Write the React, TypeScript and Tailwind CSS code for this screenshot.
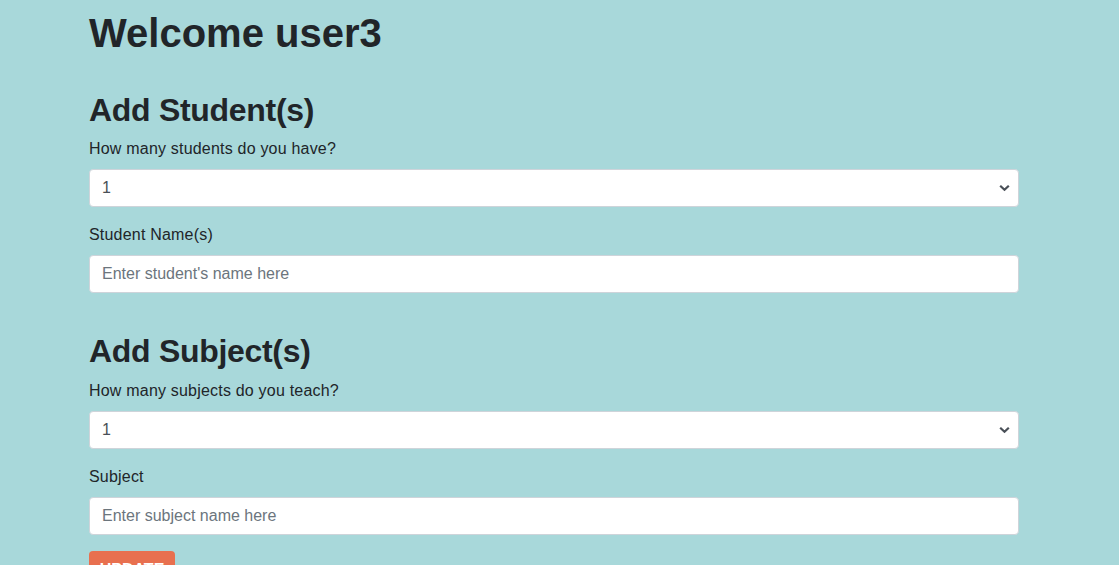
import { ChangeEvent, useState } from 'react'

const FONT = { fontFamily: '"Liberation Sans", Helvetica, Arial, sans-serif' }

const inputCls =
  'block w-full h-[38px] px-3 text-base text-[#495057] bg-white border border-[#ced4da] rounded-[4px] placeholder:text-[#6c757d] outline-none'

function Chevron() {
  return (
    <svg
      className="absolute right-[9px] top-1/2 -translate-y-1/2 pointer-events-none"
      width="11"
      height="7"
      viewBox="0 0 11 7"
    >
      <path d="M1.2 1.2 L5.5 5.3 L9.8 1.2" fill="none" stroke="#4a5058" strokeWidth="2.2" />
    </svg>
  )
}

function CountSelect({ value, onChange }: { value: string; onChange: (e: ChangeEvent<HTMLSelectElement>) => void }) {
  return (
    <div className="relative">
      <select value={value} onChange={onChange} className={`${inputCls} appearance-none pr-8`} style={FONT}>
        {['1', '2', '3', '4', '5'].map(n => (
          <option key={n} value={n}>{n}</option>
        ))}
      </select>
      <Chevron />
    </div>
  )
}

export default function App() {
  const [students, setStudents] = useState('1')
  const [subjects, setSubjects] = useState('1')

  return (
    <div className="min-h-screen bg-[#a8d8da] text-[#212529] flow-root" style={FONT}>
      <div className="w-[930px] ml-[89px] pt-[9px]">
        <h1 className="text-[40px] leading-[1.2] font-bold mb-2">Welcome user3</h1>

        <section className="mt-[34px]">
          <h2 className="text-[32px] leading-[1.2] font-bold tracking-[-0.3px] mb-2">Add Student(s)</h2>
          <div className="mb-4">
            <label className="block text-base leading-6 tracking-[0.2px] mb-2">How many students do you have?</label>
            <CountSelect value={students} onChange={e => setStudents(e.target.value)} />
          </div>
          <div className="mb-4">
            <label className="block text-base leading-6 tracking-[0.2px] mb-2">Student Name(s)</label>
            <input className={inputCls} style={FONT} placeholder="Enter student's name here" />
          </div>
        </section>

        <section className="mt-[39px]">
          <h2 className="text-[32px] leading-[1.2] font-bold tracking-[-0.3px] mb-2">Add Subject(s)</h2>
          <div className="mb-4">
            <label className="block text-base leading-6 tracking-[0.2px] mb-2">How many subjects do you teach?</label>
            <CountSelect value={subjects} onChange={e => setSubjects(e.target.value)} />
          </div>
          <div className="mb-4">
            <label className="block text-base leading-6 tracking-[0.2px] mb-2">Subject</label>
            <input className={inputCls} style={FONT} placeholder="Enter subject name here" />
          </div>
        </section>

        <button className="w-[86px] h-[38px] rounded-[4px] bg-[#e8704f] text-white text-base font-bold uppercase" style={FONT}>
          Update
        </button>
      </div>
    </div>
  )
}
